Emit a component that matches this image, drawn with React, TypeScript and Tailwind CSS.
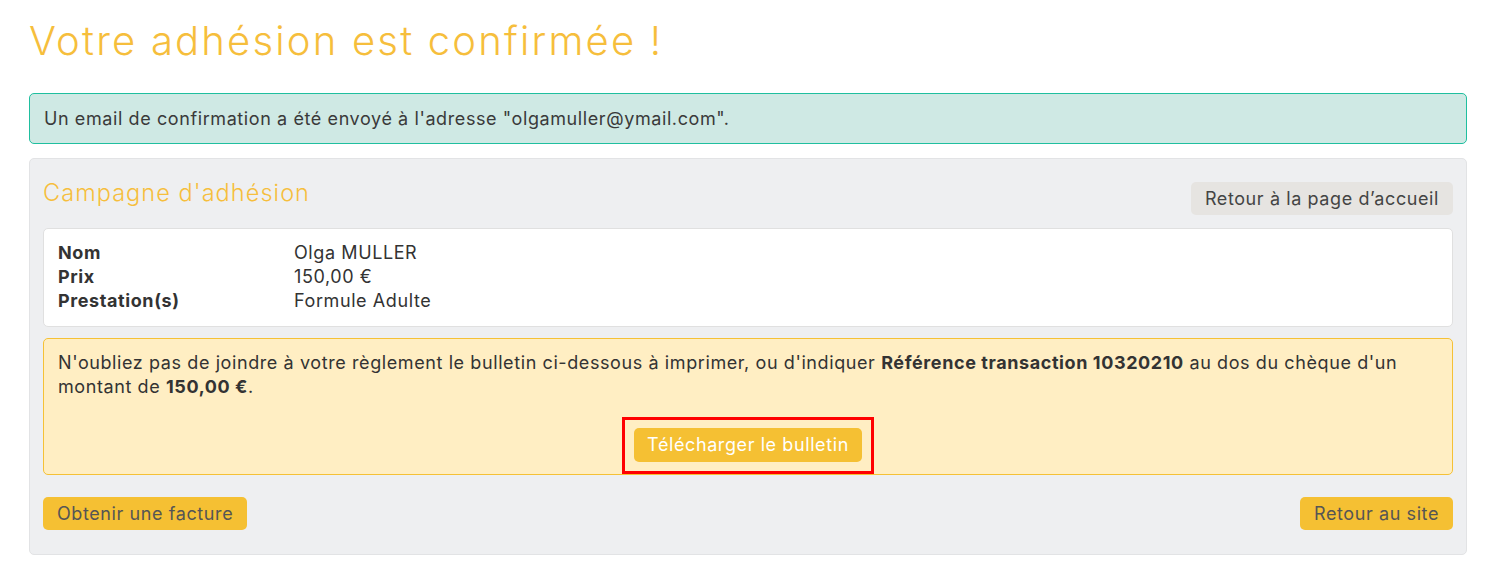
import React from 'react';

const font = { fontFamily: 'Inter, "Noto Sans", sans-serif' };

export default function App() {
  return (
    <div className="min-h-screen bg-white pl-[29px] pr-[25px] pt-[17px] text-[18px] leading-6 tracking-[0.033em] text-[#333333]" style={font}>
      <h1 className="text-[40px] leading-[48px] font-light tracking-[0.055em] text-[#f6be3c]">
        Votre adhésion est confirmée !
      </h1>

      {/* Confirmation alert */}
      <div className="mt-7 rounded-[5px] border border-[#1fbf9f] bg-[#cfe9e4] px-[14px] py-[12px] leading-[25px] text-[#3a3a3a]">
        Un email de confirmation a été envoyé à l'adresse "olgamuller@ymail.com".
      </div>

      {/* Campaign card */}
      <div className="mt-[14px] rounded-[5px] border border-[#e2e3e5] bg-[#eeeff1] px-[13px] pt-[18px] pb-6">
        <div className="flex items-start justify-between">
          <h2 className="text-[23.5px] leading-8 font-light tracking-[0.045em] text-[#f6be3c]">Campagne d'adhésion</h2>
          <button className="mt-[5px] h-[33px] rounded-[5px] bg-[#e6e4e1] px-[14px] text-[#444444]">
            Retour à la page d’accueil
          </button>
        </div>

        <div className="mt-[13px] rounded-[5px] border border-[#e0e0e0] bg-white px-[14px] pt-3 pb-[13px]">
          <div className="grid grid-cols-[236px_1fr]">
            <span className="font-bold">Nom</span>
            <span>Olga MULLER</span>
            <span className="font-bold">Prix</span>
            <span>150,00 €</span>
            <span className="font-bold">Prestation(s)</span>
            <span>Formule Adulte</span>
          </div>
        </div>

        <div className="mt-[11px] rounded-[5px] border border-[#f5c136] bg-[#ffeec3] px-[14px] pt-3">
          <p>
            N'oubliez pas de joindre à votre règlement le bulletin ci-dessous à imprimer, ou d'indiquer{' '}
            <strong>Référence transaction 10320210</strong> au dos du chèque d'un montant de <strong>150,00 €</strong>.
          </p>
          <div className="mt-[18px] flex justify-center">
            <div className="border-[3px] border-[#ff0000] px-[9px] pt-2 pb-[9px]">
              <button className="h-[34px] w-[228px] rounded-[5px] bg-[#f5c033] text-white">
                Télécharger le bulletin
              </button>
            </div>
          </div>
        </div>

        <div className="mt-[22px] flex justify-between">
          <button className="h-[33px] rounded-[5px] bg-[#f5c033] px-[14px] text-[#555555]">Obtenir une facture</button>
          <button className="h-[33px] rounded-[5px] bg-[#f5c033] px-[14px] text-[#555555]">Retour au site</button>
        </div>
      </div>
    </div>
  );
}
